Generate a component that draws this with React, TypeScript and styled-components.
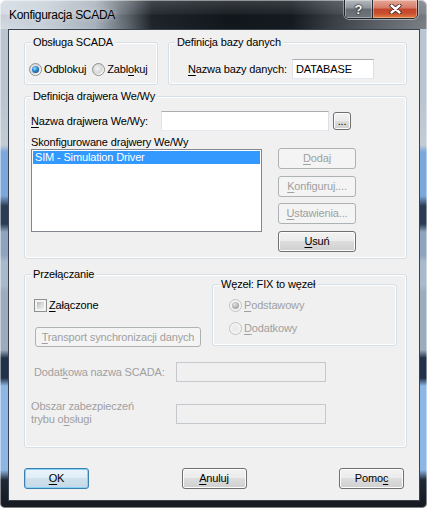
import React from 'react';
import styled, { createGlobalStyle } from 'styled-components';

const FONT = `"Liberation Sans", Arial, sans-serif`;
const DISABLED = '#a0a0a0';

const GlobalStyle = createGlobalStyle`
  html, body { margin: 0; padding: 0; background: #ffffff; }
  body { font-family: ${FONT}; }
`;

const titleGradient = `linear-gradient(to right, #d3dbe3 0px, #c9d2db 45px, #aab4be 95px, #5f676f 128px, #1f252b 152px, #12171c 230px, #161b21 292px, #3a4046 332px, #5f656b 382px, #7c8288 427px)`;
const glassShade = `linear-gradient(to bottom, rgba(255,255,255,0.16) 0px, rgba(255,255,255,0.04) 14px, rgba(0,0,0,0.06) 15px, rgba(0,0,0,0) 29px)`;
const frameGradient = `linear-gradient(to bottom, #b9c5d1 0px, #b9c5d1 100px, #c3ccd5 145px, #7aa7dc 152px, #7aa7dc 196px, #2c3b55 206px, #2c3b55 224px, #8ea4be 232px, #8ea4be 255px, #a9bacd 262px, #a9bacd 285px, #9cacbd 292px, #9cacbd 350px, #21314a 358px, #21314a 378px, #8cb6e6 386px, #8cb6e6 470px, #1f2835 480px, #151a20 508px)`;

const Window = styled.div`
  box-sizing: border-box;
  width: 427px;
  height: 508px;
  padding: 0 7px 7px 8px;
  border-radius: 6px 6px 5px 5px;
  overflow: hidden;
  background: ${glassShade} 0 0 / 100% 29px no-repeat, ${titleGradient} 0 0 / 100% 29px no-repeat, ${frameGradient};
  box-shadow: inset 0 0 0 1px rgba(255, 255, 255, 0.45);
  font-family: ${FONT};
  color: #000;
`;

const TitleBar = styled.div`
  display: flex;
  justify-content: space-between;
  align-items: flex-start;
  height: 29px;
`;

const Title = styled.span`
  margin: 8px 0 0 1px;
  font-size: 12px;
  line-height: 15px;
  letter-spacing: -0.3px;
  white-space: nowrap;
  text-shadow: 0 0 6px rgba(255, 255, 255, 0.85);
`;

const CaptionButtons = styled.div`
  box-sizing: border-box;
  display: flex;
  width: 74px;
  height: 19px;
  margin-right: 2px;
  border: 1px solid rgba(28, 32, 38, 0.9);
  border-top: none;
  border-radius: 0 0 5px 5px;
  overflow: hidden;
  box-shadow: 0 1px 0 rgba(255, 255, 255, 0.45), 1px 0 0 rgba(255, 255, 255, 0.35),
    -1px 0 0 rgba(255, 255, 255, 0.35);
`;

const HelpButton = styled.div`
  display: flex;
  align-items: center;
  justify-content: center;
  width: 27px;
  border-right: 1px solid rgba(28, 32, 38, 0.9);
  background: linear-gradient(#b4b9be 0%, #8d9399 45%, #656b71 50%, #70767c 100%);
  box-shadow: inset 0 0 0 1px rgba(255, 255, 255, 0.35);
  color: #fff;
  font-weight: bold;
  font-size: 13px;
  line-height: 13px;
  text-shadow: 0 0 2px #000, 0 0 1px #000;
`;

const CloseButton = styled.div`
  display: flex;
  align-items: center;
  justify-content: center;
  flex: 1;
  background: linear-gradient(#e8a897 0%, #d47a66 45%, #c2452c 50%, #c9502f 75%, #e6803f 100%);
  box-shadow: inset 0 0 0 1px rgba(255, 255, 255, 0.35);
`;

const Client = styled.div`
  box-sizing: border-box;
  display: flex;
  flex-direction: column;
  padding: 12px 12px 11px 15px;
  background: #f0f0f0;
  border: 1px solid #3a434d;
  font-size: 11px;
  letter-spacing: -0.15px;
`;

const GroupBox = styled.div`
  position: relative;
  box-sizing: border-box;
  border: 1px solid #d5dfe5;
  border-radius: 3px;
  box-shadow: inset 0 0 0 1px #ffffff;
`;

const Legend = styled.span`
  position: absolute;
  top: -7px;
  left: 6px;
  padding: 0 2px;
  background: #f0f0f0;
  line-height: 13px;
  white-space: nowrap;
`;

const U = styled.span`
  text-decoration: underline;
  text-decoration-thickness: 1px;
  text-underline-offset: 2px;
`;

const TopRow = styled.div`
  display: flex;
  gap: 10px;
  height: 43px;
`;

const ScadaGroup = styled(GroupBox)`
  width: 134px;
  height: 43px;
  display: flex;
  align-items: flex-start;
  gap: 6px;
  padding: 19px 0 0 4px;
`;

const DbGroup = styled(GroupBox)`
  width: 239px;
  height: 43px;
  display: flex;
  align-items: flex-start;
  gap: 6px;
  padding: 16px 0 0 19px;
`;

const FieldLabel = styled.span<{ $w: number }>`
  flex: none;
  width: ${(p) => p.$w}px;
  line-height: 20px;
  white-space: nowrap;
`;

const TextBox = styled.div<{ $w: number; $disabled?: boolean }>`
  box-sizing: border-box;
  flex: none;
  width: ${(p) => p.$w}px;
  height: 20px;
  padding: 0 3px;
  line-height: 18px;
  border: 1px solid;
  border-color: ${(p) => (p.$disabled ? '#c5c8cc' : '#abadb3 #dbdfe6 #e3e9ef #e2e3ea')};
  background: ${(p) => (p.$disabled ? '#f0f0f0' : '#ffffff')};
  white-space: nowrap;
`;

const Button = styled.button<{ $w: number; $h: number; $default?: boolean }>`
  box-sizing: border-box;
  flex: none;
  width: ${(p) => p.$w}px;
  height: ${(p) => p.$h}px;
  padding: 0;
  border: 1px solid ${(p) => (p.$default ? '#3c7fb1' : '#707070')};
  border-radius: 3px;
  background: ${(p) =>
    p.$default
      ? 'linear-gradient(#eaf4fa 0%, #e0edf5 49%, #cfe1ec 50%, #c5d9e6 100%)'
      : 'linear-gradient(#f2f2f2 0%, #ebebeb 49%, #dddddd 50%, #cfcfcf 100%)'};
  box-shadow: inset 0 0 0 1px ${(p) => (p.$default ? '#86d3f6' : '#fcfcfc')};
  color: #000;
  font-family: ${FONT};
  font-size: 11px;
  letter-spacing: -0.15px;
  line-height: ${(p) => p.$h - 2}px;
  white-space: nowrap;
  cursor: default;

  &:disabled {
    border-color: #adb2b5;
    background: #f4f4f4;
    box-shadow: none;
    color: ${DISABLED};
  }
`;

const RadioOption = styled.label<{ $disabled?: boolean; $h: number }>`
  display: flex;
  align-items: center;
  gap: 2px;
  height: ${(p) => p.$h}px;
  line-height: ${(p) => p.$h}px;
  white-space: nowrap;
  color: ${(p) => (p.$disabled ? DISABLED : '#000')};
`;

const RadioCircle = styled.span<{ $checked?: boolean; $disabled?: boolean }>`
  position: relative;
  box-sizing: border-box;
  flex: none;
  width: 13px;
  height: 13px;
  border-radius: 50%;
  border: 1px solid ${(p) => (p.$disabled ? '#c2c2c2' : '#8e8f8f')};
  background: ${(p) =>
    p.$disabled
      ? 'radial-gradient(circle at 50% 50%, #e9e9e9 0, #eeeeee 45%, #f7f7f7 70%)'
      : 'radial-gradient(circle at 40% 40%, #f4f4f4 0, #d6d6d6 50%, #ffffff 72%)'};

  &::after {
    content: '';
    display: ${(p) => (p.$checked ? 'block' : 'none')};
    position: absolute;
    inset: 2px;
    border-radius: 50%;
    background: ${(p) =>
      p.$disabled
        ? 'radial-gradient(circle at 40% 35%, #e4e4e4 0, #b4b4b4 50%, #9a9a9a 100%)'
        : 'radial-gradient(circle at 40% 35%, #9fe6ff 0, #2f8ad4 40%, #164a8c 85%)'};
  }
`;

const DriverGroup = styled(GroupBox)`
  margin-top: 11px;
  height: 163px;
  display: flex;
  flex-direction: column;
  padding: 14px 0 0 6px;
`;

const DriverRow = styled.div`
  display: flex;
  align-items: center;
  height: 20px;
`;

const BrowseButton = styled(Button)`
  margin-left: 4px;
  line-height: 12px;
`;

const ListCaption = styled.div`
  margin-top: 6px;
  line-height: 11px;
  white-space: nowrap;
`;

const ListArea = styled.div`
  display: flex;
  align-items: flex-start;
  gap: 16px;
`;

const ListBox = styled.div`
  box-sizing: border-box;
  width: 231px;
  height: 83px;
  margin-top: 1px;
  padding: 1px;
  border: 1px solid #828790;
  background: #ffffff;
`;

const ListItem = styled.div<{ $selected?: boolean }>`
  height: 13px;
  line-height: 13px;
  padding-left: 2px;
  white-space: nowrap;
  background: ${(p) => (p.$selected ? '#3399ff' : 'transparent')};
  color: ${(p) => (p.$selected ? '#ffffff' : '#000')};
`;

const ButtonColumn = styled.div`
  display: flex;
  flex-direction: column;
  gap: 6.67px;
`;

const SwitchGroup = styled(GroupBox)`
  margin-top: 15px;
  height: 174px;
  display: flex;
  flex-direction: column;
  padding: 9px 9px 0 6px;
`;

const SwitchTop = styled.div`
  display: flex;
  justify-content: space-between;
  height: 62px;
`;

const SwitchLeft = styled.div`
  display: flex;
  flex-direction: column;
  align-items: flex-start;
  padding-left: 3px;
`;

const CheckRow = styled.label`
  display: flex;
  align-items: center;
  gap: 2px;
  margin-top: 15px;
  height: 13px;
  line-height: 13px;
  white-space: nowrap;
`;

const CheckBox = styled.span`
  box-sizing: border-box;
  flex: none;
  width: 13px;
  height: 13px;
  padding: 2px;
  border: 1px solid #8e8f8f;
  background: #f4f4f4;

  &::after {
    content: '';
    display: block;
    width: 100%;
    height: 100%;
    background: linear-gradient(135deg, #b3b8bd 0%, #d8dadc 50%, #efefef 100%);
  }
`;

const TransportButton = styled(Button)`
  margin-top: 15px;
  margin-left: 1px;
`;

const NodeGroup = styled(GroupBox)`
  width: 185px;
  height: 62px;
  display: flex;
  flex-direction: column;
  gap: 10px;
  padding: 14px 0 0 16px;
`;

const ExtraRow = styled.div`
  display: flex;
  align-items: center;
  margin-top: 16px;
`;

const AreaRow = styled.div`
  display: flex;
  align-items: flex-start;
  margin-top: 18px;
`;

const RowLabel = styled.span<{ $indent: number }>`
  box-sizing: border-box;
  flex: none;
  width: 145px;
  padding-left: ${(p) => p.$indent}px;
  line-height: 12.5px;
  color: ${DISABLED};
`;

const AreaBox = styled(TextBox)`
  margin-top: 4px;
`;

const ButtonBar = styled.div`
  display: flex;
  justify-content: space-between;
  margin-top: 20px;
  padding-right: 3px;
`;

function CloseGlyph() {
  return (
    <svg width="13" height="10" viewBox="0 0 13 10">
      <path d="M2.5 1.5 L10.5 8.5 M10.5 1.5 L2.5 8.5" stroke="#3a1a12" strokeWidth="4" strokeLinecap="round" />
      <path d="M2.5 1.5 L10.5 8.5 M10.5 1.5 L2.5 8.5" stroke="#ffffff" strokeWidth="2.4" strokeLinecap="round" />
    </svg>
  );
}

export default function App() {
  return (
    <>
      <GlobalStyle />
      <Window>
        <TitleBar>
          <Title>Konfiguracja SCADA</Title>
          <CaptionButtons>
            <HelpButton>?</HelpButton>
            <CloseButton>
              <CloseGlyph />
            </CloseButton>
          </CaptionButtons>
        </TitleBar>
        <Client>
          <TopRow>
            <ScadaGroup>
              <Legend>Obsługa SCADA</Legend>
              <RadioOption $h={14}>
                <RadioCircle $checked />
                Odblokuj
              </RadioOption>
              <RadioOption $h={14}>
                <RadioCircle />
                <span>
                  Zabl<U>o</U>kuj
                </span>
              </RadioOption>
            </ScadaGroup>
            <DbGroup>
              <Legend>Definicja bazy danych</Legend>
              <FieldLabel $w={98}>
                <U>N</U>azwa bazy danych:
              </FieldLabel>
              <TextBox $w={82}>DATABASE</TextBox>
            </DbGroup>
          </TopRow>

          <DriverGroup>
            <Legend>Definicja drajwera We/Wy</Legend>
            <DriverRow>
              <FieldLabel $w={130}>
                <U>N</U>azwa drajwera We/Wy:
              </FieldLabel>
              <TextBox $w={168} />
              <BrowseButton $w={18} $h={18}>...</BrowseButton>
            </DriverRow>
            <ListCaption>Skonfigurowane drajwery We/Wy</ListCaption>
            <ListArea>
              <ListBox>
                <ListItem $selected>SIM - Simulation Driver</ListItem>
              </ListBox>
              <ButtonColumn>
                <Button $w={78} $h={21} disabled>
                  <U>D</U>odaj
                </Button>
                <Button $w={78} $h={21} disabled>
                  <U>K</U>onfiguruj....
                </Button>
                <Button $w={78} $h={21} disabled>
                  <U>U</U>stawienia...
                </Button>
                <Button $w={78} $h={21}>
                  <U>U</U>suń
                </Button>
              </ButtonColumn>
            </ListArea>
          </DriverGroup>

          <SwitchGroup>
            <Legend>Przełączanie</Legend>
            <SwitchTop>
              <SwitchLeft>
                <CheckRow>
                  <CheckBox />
                  <span>
                    <U>Z</U>ałączone
                  </span>
                </CheckRow>
                <TransportButton $w={166} $h={20} disabled>
                  <U>T</U>ransport synchronizacji danych
                </TransportButton>
              </SwitchLeft>
              <NodeGroup>
                <Legend>Węzeł: FIX to węzeł</Legend>
                <RadioOption $h={13} $disabled>
                  <RadioCircle $checked $disabled />
                  <span>
                    <U>P</U>odstawowy
                  </span>
                </RadioOption>
                <RadioOption $h={13} $disabled>
                  <RadioCircle $disabled />
                  <span>
                    <U>D</U>odatkowy
                  </span>
                </RadioOption>
              </NodeGroup>
            </SwitchTop>
            <ExtraRow>
              <RowLabel $indent={3}>
                Dodat<U>k</U>owa nazwa SCADA:
              </RowLabel>
              <TextBox $w={150} $disabled />
            </ExtraRow>
            <AreaRow>
              <RowLabel $indent={0}>
                Obszar zabezpieczeń
                <br />
                trybu o<U>b</U>sługi
              </RowLabel>
              <AreaBox $w={150} $disabled />
            </AreaRow>
          </SwitchGroup>

          <ButtonBar>
            <Button $w={65} $h={21} $default>
              <U>O</U>K
            </Button>
            <Button $w={65} $h={21}>
              <U>A</U>nuluj
            </Button>
            <Button $w={65} $h={21}>
              Pomo<U>c</U>
            </Button>
          </ButtonBar>
        </Client>
      </Window>
    </>
  );
}
